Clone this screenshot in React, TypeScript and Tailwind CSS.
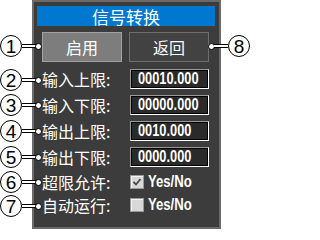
import React from "react";

const font = { fontFamily: '"Noto Sans CJK SC", "Noto Sans", sans-serif' };

function Callout({ n, top, right }: { n: string; top: number; right?: boolean }) {
  return (
    <div
      className={`absolute flex items-center ${right ? "flex-row-reverse right-[1px]" : "left-0"}`}
      style={{ top }}
    >
      <div className="w-[22px] h-[22px] rounded-full border-[1.6px] border-black bg-white flex items-center justify-center text-[19px] leading-none text-black font-['Liberation_Sans',sans-serif]">
        {n}
      </div>
      <div className="w-[14px] h-[4px] bg-white border-y border-black" />
      <div className={`w-[7px] h-[7px] rounded-full bg-white border border-black ${right ? "-mr-[1px]" : "-ml-[1px]"}`} />
    </div>
  );
}

function InputRow({ label, value }: { label: string; value: string }) {
  return (
    <div className="flex items-center h-[20px]">
      <div className="w-[88px] text-white text-[16px] leading-none" style={font}>
        {label}
      </div>
      <div className="w-[79px] h-[20px] border border-t-[#9a9a9a] border-l-[#9a9a9a] border-r-white border-b-white bg-[#2a2a2a] shadow-[inset_1px_1px_0_#000,inset_-1px_-1px_0_#000] flex items-center pl-[7px] overflow-hidden">
        <span className="inline-block origin-left scale-x-[0.8] whitespace-nowrap text-white text-[16px] leading-none font-bold font-['Liberation_Sans',sans-serif]">
          {value}
        </span>
      </div>
    </div>
  );
}

function CheckRow({ label, checked }: { label: string; checked: boolean }) {
  return (
    <div className="flex items-center h-[22px]">
      <div className="w-[88px] text-white text-[16px] leading-none" style={font}>
        {label}
      </div>
      <div className="w-[14px] h-[14px] border border-[#9a9a9a] bg-[#d8d8d8] shadow-[inset_1px_1px_0_#f4f4f4] flex items-center justify-center">
        {checked && (
          <svg width="10" height="10" viewBox="0 0 10 10">
            <path d="M1.5 5 L4 7.5 L8.5 2" stroke="#4a4a4a" strokeWidth="1.8" fill="none" />
          </svg>
        )}
      </div>
      <span className="ml-[4px] inline-block origin-left scale-x-[0.82] whitespace-nowrap text-white text-[16px] leading-none font-bold font-['Liberation_Sans',sans-serif]">
        Yes/No
      </span>
    </div>
  );
}

export default function App() {
  return (
    <div className="relative w-[251px] h-[230px] bg-white overflow-hidden">
      <div className="ml-[32px] w-[189px] h-[229px] border-2 border-[#6a6a6a] bg-[#3c3c3c] flex flex-col">
        <div
          className="mt-[4px] ml-[3px] w-[178px] h-[20px] bg-[#0078d0] text-white text-[17px] leading-none flex items-center justify-center"
          style={font}
        >
          信号转换
        </div>
        <div className="mt-[6px] ml-[8px] flex gap-[7px]">
          <div
            className="w-[80px] h-[30px] bg-[#7d7d7d] border border-[#a2a2a2] text-white text-[16px] flex items-center justify-center"
            style={font}
          >
            启用
          </div>
          <div
            className="w-[80px] h-[30px] bg-[#424242] border border-[#6e6e6e] text-white text-[16px] flex items-center justify-center"
            style={font}
          >
            返回
          </div>
        </div>
        <div className="mt-[7px] ml-[8px] flex flex-col gap-[6px]">
          <InputRow label="输入上限:" value="00010.000" />
          <InputRow label="输入下限:" value="00000.000" />
          <InputRow label="输出上限:" value="0010.000" />
          <InputRow label="输出下限:" value="0000.000" />
        </div>
        <div className="mt-[4px] ml-[8px] flex flex-col gap-[1px]">
          <CheckRow label="超限允许:" checked={true} />
          <CheckRow label="自动运行:" checked={false} />
        </div>
      </div>
      <Callout n="1" top={35} />
      <Callout n="2" top={69} />
      <Callout n="3" top={94} />
      <Callout n="4" top={120} />
      <Callout n="5" top={146} />
      <Callout n="6" top={171} />
      <Callout n="7" top={195} />
      <Callout n="8" top={35} right />
    </div>
  );
}
